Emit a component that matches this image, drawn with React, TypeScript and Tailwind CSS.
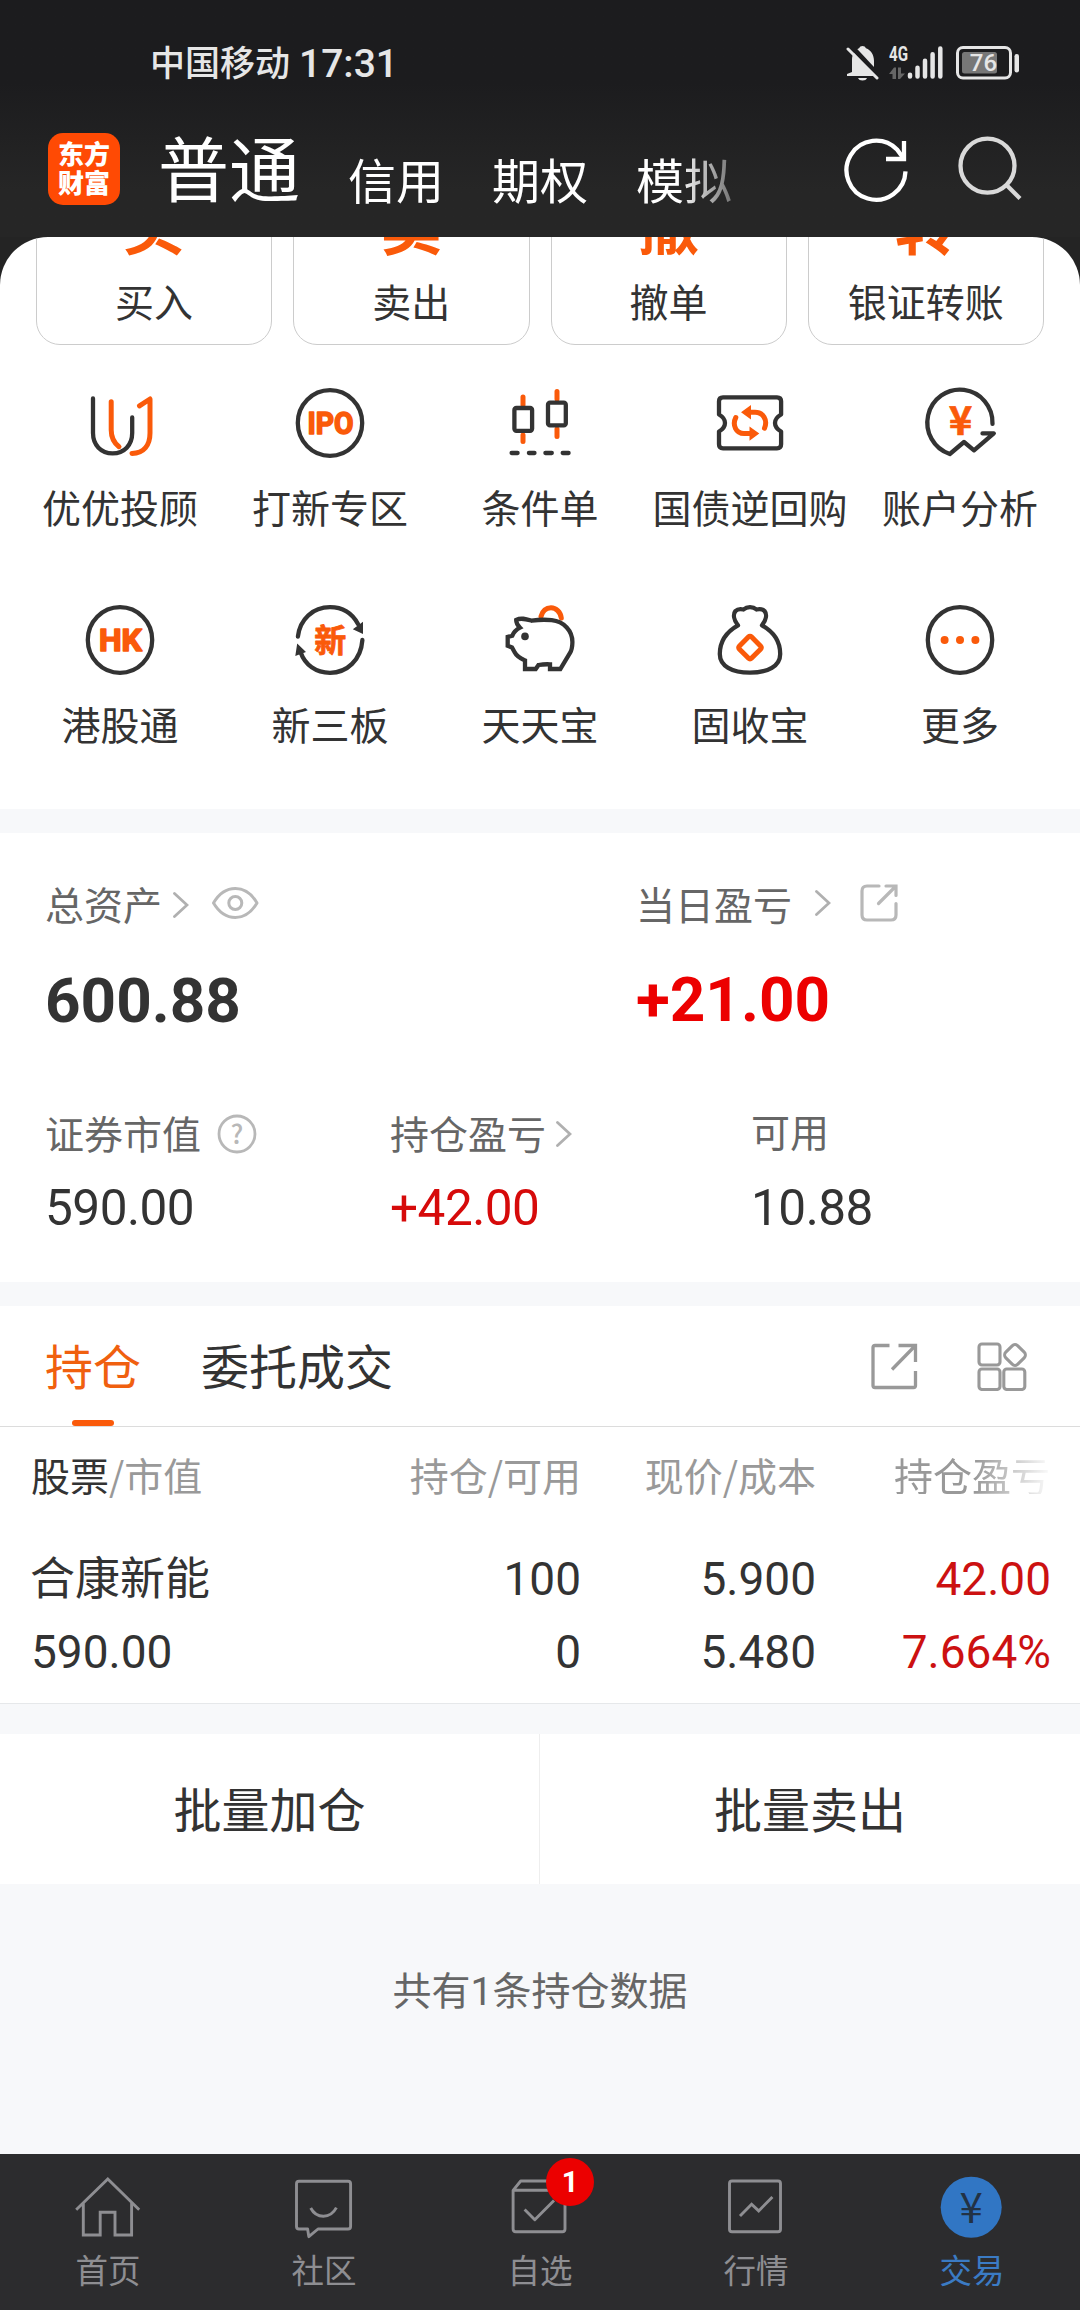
import type { ReactNode } from "react";

const accountTabs = ["信用", "期权", "模拟"];

const quickActions = [
  { glyph: "买", label: "买入" },
  { glyph: "卖", label: "卖出" },
  { glyph: "撤", label: "撤单" },
  { glyph: "转", label: "银证转账" },
];

const dark = { fill: "none", stroke: "#333", strokeWidth: 4.3, strokeLinecap: "round", strokeLinejoin: "round" } as const;
const orange = { ...dark, stroke: "#fa5a0a", strokeWidth: 5 } as const;
const orangeText = {
  fill: "#fa5a0a",
  stroke: "#fa5a0a",
  strokeLinejoin: "round",
  textAnchor: "middle",
  fontWeight: 700,
} as const;

function Icon({ children }: { children: ReactNode }) {
  return (
    <svg viewBox="0 0 72 72" className="h-[72px] w-[72px] shrink-0 overflow-visible">
      {children}
    </svg>
  );
}

const services: { label: string; icon: ReactNode }[] = [
  {
    label: "优优投顾",
    icon: (
      <>
        <path {...dark} d="M9 11.5V46C9 58 17 66.3 28.6 66.3S48.2 58 48.2 46V30.5" />
        <path {...orange} d="M27.2 14.8V43C27.2 51 29.5 55.5 35 59.7M55.5 18.8L66 12V46C66 58 60 66 48 66.5" />
      </>
    ),
  },
  {
    label: "打新专区",
    icon: (
      <>
        <ellipse {...dark} cx="36" cy="36" rx="32.2" ry="32.8" />
        <text
          {...orangeText}
          className="font-['Roboto',sans-serif]"
          x="36.5"
          y="46.8"
          fontSize="30.5"
          strokeWidth="1.6"
          textLength="46"
          lengthAdjust="spacingAndGlyphs"
        >
          IPO
        </text>
      </>
    ),
  },
  {
    label: "条件单",
    icon: (
      <>
        <path {...orange} d="M19 10V18M19 48V54.5M53 4.6V12M53 42V49.4" />
        <rect {...dark} x="10.4" y="21" width="17.7" height="22.8" rx="2" />
        <rect {...dark} x="44" y="15.7" width="17.8" height="22.7" rx="2" />
        <path {...dark} d="M7.6 66H13.6M24.9 66H30.5M41.4 66H47.8M58.7 66H64.6" />
      </>
    ),
  },
  {
    label: "国债逆回购",
    icon: (
      <>
        <path
          {...dark}
          d="M9 10.3H63Q67.1 10.3 67.1 14.3V27.5Q61 31 61 36T67.1 44.5V57.3Q67.1 61.3 63 61.3H9Q5 61.3 5 57.3V44.5Q11 41 11 36T5 27.5V14.3Q5 10.3 9 10.3Z"
        />
        <path {...orange} d="M36 25.3H41C49 25.3 54 33 50.5 41.2M36 46.5H30C22 46.5 18 38 21.8 30.5" />
        <path fill="#fa5a0a" d="M27 25.3L37 18V32.5ZM45.3 46.5L35.5 39.5V53.7Z" />
      </>
    ),
  },
  {
    label: "账户分析",
    icon: (
      <>
        <path {...dark} d="M68.5 36.8A32.6 33 0 1 0 25.8 67L40 55L50 63.3L69.8 46.4H58.5" />
        <text {...orangeText} x="36.5" y="48" fontSize="40" strokeWidth="0.6">
          ¥
        </text>
      </>
    ),
  },
  {
    label: "港股通",
    icon: (
      <>
        <ellipse {...dark} cx="36" cy="36" rx="32.2" ry="32.8" />
        <text
          {...orangeText}
          className="font-['Roboto',sans-serif]"
          x="36.5"
          y="46.8"
          fontSize="30.5"
          strokeWidth="1.6"
          textLength="43"
          lengthAdjust="spacingAndGlyphs"
        >
          HK
        </text>
      </>
    ),
  },
  {
    label: "新三板",
    icon: (
      <>
        <path {...dark} d="M3.9 32.5C6 15 19 3.2 36 3.2C48 3.2 58 9 64 20M68.4 36C67 56 53 68.8 36 68.8C22 68.8 11 61 6.5 48" />
        <path fill="#333" d="M58.8 25.3L69 17.8V30ZM3.2 39.5L12 48L1.3 52Z" />
        <text {...orangeText} x="36.3" y="47.5" fontSize="32" strokeWidth="0.8">
          新
        </text>
      </>
    ),
  },
  {
    label: "天天宝",
    icon: (
      <>
        <path {...orange} d="M37 12.5C38.5 7 42 3.8 47 3.8S56.5 8 57.3 14" />
        <path
          {...dark}
          strokeLinejoin="miter"
          d="M12.2 15.8C17 13.4 22 15 27.7 16.7C35 15.6 42 15.5 47.7 16.2C60 17.5 68.6 27 68.4 38.5C68.3 43 67.6 46.5 66 49L56.3 65H46V60.3Q40 60 34.5 61L31.7 65H21V56.5Q13 53 10.5 48L8 43.5L3.7 41.7V33L8.3 31.7Q10.5 26.5 16 23.7Q12 19.5 12.2 15.8Z"
        />
        <circle cx="21" cy="32.4" r="3.8" fill="#333" />
      </>
    ),
  },
  {
    label: "固收宝",
    icon: (
      <>
        <path
          {...dark}
          d="M24 21.3C19.5 15.5 19 10 21.5 7C23.5 5 26.5 4.8 29.5 5.5C33 2.4 39 2.4 42.5 5.5C45.5 4.8 48.5 5 50.5 7C53 10 52.5 15.5 48 21.3C60 28 66.2 37 66.2 50C66.2 62 54 68.7 36 68.7S5.8 62 5.8 50C5.8 37 12 28 24 21.3Z"
        />
        <rect {...orange} x="27.4" y="35" width="17.2" height="17.2" rx="2" transform="rotate(45 36 43.6)" />
      </>
    ),
  },
  {
    label: "更多",
    icon: (
      <>
        <ellipse {...dark} cx="36" cy="36" rx="32.2" ry="32.8" />
        <g fill="#fa5a0a">
          <circle cx="20.6" cy="36" r="4" />
          <circle cx="36" cy="36" r="4" />
          <circle cx="51.4" cy="36" r="4" />
        </g>
      </>
    ),
  },
];

const holdings = [
  {
    name: "合康新能",
    nameClass: "-ml-px",
    values: ["100", "5.900", "42.00"],
  },
  {
    name: "590.00",
    nameClass: "h-[50px] font-['Roboto',sans-serif] text-[46px] leading-[57px]",
    values: ["0", "5.480", "7.664%"],
  },
];

const navStroke = { fill: "none", stroke: "#8e8e92", strokeWidth: 2.9, strokeLinejoin: "round" } as const;

const navItems: { label: string; icon: ReactNode; badge?: string; active?: boolean }[] = [
  {
    label: "首页",
    icon: <path {...navStroke} strokeLinejoin="miter" d="M4.2 38.8L35.8 8L67.2 38.8M11.3 32V64H28.2V41.3H43V64H59.6V32" />,
  },
  {
    label: "社区",
    icon: (
      <path
        {...navStroke}
        d="M11 10.3H60Q62.6 10.3 62.6 13V55.4Q62.6 58 60 58H30L20.8 65.6L19.6 58H11Q8.5 58 8.5 55.4V13Q8.5 10.3 11 10.3ZM22.7 37Q27 45.2 35.4 45.2T48.4 36.6"
      />
    ),
  },
  {
    label: "自选",
    badge: "1",
    icon: (
      <path
        {...navStroke}
        d="M9.1 19.3L16.7 10H54L61 19.3V58Q61 60.7 58.4 60.7H11.7Q9.1 60.7 9.1 58ZH61M20.6 38.5L30.8 48.7L50 29.5"
      />
    ),
  },
  {
    label: "行情",
    icon: (
      <>
        <rect {...navStroke} x="9.5" y="10" width="51" height="50.7" rx="2.5" />
        <path {...navStroke} strokeLinejoin="miter" d="M20 45L31.6 33.2L38.7 39.9L52.4 26" />
      </>
    ),
  },
  {
    label: "交易",
    active: true,
    icon: (
      <>
        <circle cx="35.2" cy="36.3" r="30.5" fill="#3176c4" />
        <text x="35.2" y="51.5" fontSize="42" textAnchor="middle" fill="#223244">
          ¥
        </text>
      </>
    ),
  },
];

function Chevron({ className = "" }: { className?: string }) {
  return (
    <svg viewBox="0 0 16 26" className={`h-[26px] w-4 shrink-0 ${className}`}>
      <path d="M1.5 1.5L14 13L1.5 24.5" fill="none" stroke="#b0b0b0" strokeWidth="2.8" strokeLinecap="round" />
    </svg>
  );
}

function StatusBar() {
  return (
    <div className="flex h-[126px] items-center justify-between pr-[60px] pl-[150px] text-[#e6e6e6]">
      <div className="flex items-center font-medium">
        <span className="-mt-[3px] text-[35px]">中国移动</span>
        <span className="mt-[2px] ml-[9px] font-['Roboto',sans-serif] text-[39px]">17:31</span>
      </div>
      <svg viewBox="0 0 174 36" className="h-9 w-[174px] font-['Roboto',sans-serif]">
        <g fill="#e6e6e6">
          <path d="M6 27V15C6 9 9 4.500 13 3.200Q14 1 16.500 1T20 3.200C25 5 28 10 28 16V25L32 31H1V29Z" />
          <path d="M12 33H21Q20 35.500 16.500 35.500T12 33Z" />
        </g>
        <path d="M4 0L33 31" stroke="#1c1c1e" strokeWidth="5" />
        <path d="M2 4L31 33" stroke="#e6e6e6" strokeWidth="3" strokeLinecap="round" />
        <text x="43" y="16" fontSize="21" fontWeight="700" textLength="19" lengthAdjust="spacingAndGlyphs" fill="#e6e6e6">
          4G
        </text>
        <path d="M43 29L48 22.500H50V34H46.500V29ZM59 28.500L54 34H52V22.500H55V28.500Z" fill="#666" />
        <g stroke="#e6e6e6" strokeWidth="4.500" strokeLinecap="round">
          <path d="M64 29.700V31.500M71.500 22.700V31.500M79 15.700V31.500M86.600 9.300V31.500M94.300 3.500V31.500" />
        </g>
        <rect x="111.500" y="2.500" width="53" height="30.500" rx="5.500" fill="none" stroke="#e6e6e6" strokeWidth="3" />
        <rect x="116" y="7" width="35" height="21.500" rx="2.500" fill="#777" />
        <rect x="168.500" y="9" width="4.500" height="18.500" rx="2.200" fill="#e6e6e6" />
        <text x="137.500" y="26.300" fontSize="24" fontWeight="500" textAnchor="middle" fill="#e6e6e6">
          76
        </text>
      </svg>
    </div>
  );
}

function Header() {
  return (
    <header className="h-[237px] bg-linear-to-b from-[#1c1c1e] from-35% to-[#262626] to-80%">
      <StatusBar />
      <div className="flex h-[86px] items-center pl-12">
        <div className="flex h-[72px] w-[72px] flex-col items-center justify-center rounded-[15px] bg-[#ff4a04] pb-1 text-[26px] leading-[29px] font-black text-white">
          <span>东方</span>
          <span>财富</span>
        </div>
        <span className="-mt-2 ml-[38px] text-[71px] leading-[86px] text-white">普通</span>
        <nav className="ml-12 flex gap-12 pt-[18px] text-[48px] leading-[60px] text-white [mask-image:linear-gradient(to_right,#000_86%,transparent_108%)]">
          {accountTabs.map((tab) => (
            <span key={tab}>{tab}</span>
          ))}
        </nav>
        <svg viewBox="0 0 180 68" className="mr-[57px] ml-auto h-[68px] w-[180px]">
          <g fill="none" stroke="#fff" strokeWidth="4.300">
            <path d="M62.500 36.300A29.500 29.500 0 1 1 54 14.500L61 24" />
            <path d="M61 6V24H43" />
          </g>
          <g fill="none" stroke="#d9d9d9" strokeWidth="4.300">
            <circle cx="144.500" cy="30.700" r="27" />
            <path d="M163 49.500L177 63.500" />
          </g>
        </svg>
      </div>
    </header>
  );
}

function Services() {
  return (
    <section className="h-[572px] overflow-hidden rounded-t-[48px] bg-white text-[39px] leading-10 text-[#333]">
      {/* scrolled up, so the icons of the first row are half hidden */}
      <div className="-mt-[70px] grid grid-cols-4 gap-[21px] px-9">
        {quickActions.map((action) => (
          <div
            key={action.label}
            className="flex h-[178px] flex-col items-center justify-end gap-[26px] rounded-3xl border border-[#ccc] pb-6"
          >
            <span className="text-[62px] leading-[62px] font-bold text-[#fa5a0a]">{action.glyph}</span>
            <span>{action.label}</span>
          </div>
        ))}
      </div>
      <div className="mt-[42px] grid grid-cols-5 gap-y-[78px] px-[15px]">
        {services.map((service) => (
          <div key={service.label} className="flex flex-col items-center gap-[27px] whitespace-nowrap">
            <Icon>{service.icon}</Icon>
            <span>{service.label}</span>
          </div>
        ))}
      </div>
    </section>
  );
}

function Assets() {
  return (
    <section className="mt-6 h-[449px] bg-white pt-[50px] pl-[45px] text-[39px] leading-10 text-[#666]">
      <div className="grid grid-cols-[591px_1fr]">
        <div>
          <div className="flex items-center">
            总资产
            <Chevron className="mt-1 ml-[11px]" />
            <svg viewBox="0 0 48 34" className="ml-[22px] h-[34px] w-12">
              <g fill="none" stroke="#b8b8b8" strokeWidth="3">
                <path d="M2.500 17Q11 2.500 24.300 2.500T46 17Q37.500 31.500 24.300 31.500T2.500 17Z" strokeLinejoin="round" />
                <circle cx="24.300" cy="17" r="6.500" />
              </g>
            </svg>
          </div>
          <div className="mt-[43px] h-[60px] font-['Roboto',sans-serif] text-[62px] leading-[69px] font-bold text-[#333]">
            600.88
          </div>
        </div>
        <div>
          <div className="flex items-center">
            当日盈亏
            <Chevron className="ml-[23px]" />
            <svg viewBox="0 0 40 40" className="ml-7 h-10 w-10">
              <path
                d="M20 3H8Q3 3 3 8V32Q3 37 8 37H32Q37 37 37 32V20.500M27 3H37V12.500M36 4L19.500 20.500"
                fill="none"
                stroke="#b8b8b8"
                strokeWidth="3.200"
                strokeLinecap="round"
              />
            </svg>
          </div>
          <div className="mt-[43px] h-[60px] font-['Roboto',sans-serif] text-[62px] leading-[67px] font-bold text-[#ec0000]">
            +21.00
          </div>
        </div>
      </div>
      <div className="mt-[84px] grid grid-cols-[345px_361px_1fr]">
        <div className="flex items-center">
          证券市值
          <svg viewBox="0 0 40 40" className="mt-1 ml-4 h-10 w-10">
            <circle cx="20" cy="20" r="18" fill="none" stroke="#b8b8b8" strokeWidth="2.800" />
            <text x="20" y="29.500" fontSize="26" fontWeight="500" textAnchor="middle" fill="#b8b8b8">
              ?
            </text>
          </svg>
        </div>
        <div className="flex items-center">
          持仓盈亏
          <Chevron className="mt-1 ml-[10px]" />
        </div>
        <div>可用</div>
      </div>
      <div className="mt-[29px] grid grid-cols-[345px_361px_1fr] font-['Roboto',sans-serif] text-[49.5px] leading-[50px] tracking-[-0.5px] text-[#333]">
        <div>590.00</div>
        <div className="text-[#d60a0a]">+42.00</div>
        <div>10.88</div>
      </div>
    </section>
  );
}

function Holdings() {
  return (
    <section className="mt-6 bg-white">
      <div className="flex h-[121px] items-start border-b border-[#dcdcdc] pt-[34px] pl-[45px] text-[48px] leading-[48px] text-[#333]">
        <div className="flex flex-col items-center gap-8 text-[#f0600f]">
          持仓
          <span className="h-[6px] w-[42px] rounded-full bg-[#fa5a0a]" />
        </div>
        <div className="ml-[60px]">委托成交</div>
        <svg viewBox="0 0 48 48" className="mt-[2px] ml-auto h-12 w-12">
          <path
            d="M19.500 3.500H5Q3 3.500 3 5.500V43.500Q3 45.500 5 45.500H43.500Q45.500 45.500 45.500 43.500V29M28.500 3.500H45.500V20M44.500 4.500L22 27.500"
            fill="none"
            stroke="#999"
            strokeWidth="3.300"
          />
        </svg>
        <svg viewBox="0 0 50 50" className="mt-px mr-[53px] ml-[59px] h-[50px] w-[50px]">
          <g fill="none" stroke="#999" strokeWidth="3.100">
            <rect x="2" y="3" width="21" height="21" rx="3" />
            <rect x="2" y="28" width="21" height="20.500" rx="3" />
            <rect x="26.800" y="28" width="21" height="20.500" rx="3" />
            <rect x="29.500" y="5.500" width="17" height="17" rx="4" transform="rotate(45 38 14)" />
          </g>
        </svg>
      </div>
      <div className="grid grid-cols-[320px_230px_235px_234px] pt-[27px] pl-[31px] text-right text-[39px] leading-10 whitespace-nowrap text-[#999]">
        <div className="text-left">
          <span className="text-[#333]">股票</span>/市值
        </div>
        <div>持仓/可用</div>
        <div>现价/成本</div>
        <div className="justify-self-end [mask-image:linear-gradient(to_right,#000_52%,transparent_102%)]">持仓盈亏</div>
      </div>
      <div className="flex flex-col gap-[23px] border-b border-[#e6e8ea] pt-[57px] pb-[29px] pl-[31px]">
        {holdings.map((row) => (
          <div key={row.name} className="grid grid-cols-[320px_230px_235px_235px] text-[45px] leading-[50px] text-[#333]">
            <div className={row.nameClass}>{row.name}</div>
            {row.values.map((value, index) => (
              <div
                key={value}
                className={`h-[50px] text-right font-['Roboto',sans-serif] text-[46px] leading-[57px] ${
                  index === 2 ? "text-[#cc1111]" : ""
                }`}
              >
                {value}
              </div>
            ))}
          </div>
        ))}
      </div>
    </section>
  );
}

function TabBar() {
  return (
    <nav className="mt-auto grid h-[156px] grid-cols-5 bg-[#2c2c2e] text-[32.5px] leading-9 text-[#8e8e92]">
      {navItems.map((item) => (
        <div key={item.label} className={`flex flex-col items-center pt-[17px] ${item.active ? "text-[#3b7bc4]" : ""}`}>
          <div className="relative">
            <Icon>{item.icon}</Icon>
            {item.badge ? (
              <span className="absolute -top-[13px] left-[42px] flex h-12 w-12 items-center justify-center rounded-full bg-[#ec0000] font-['Roboto',sans-serif] text-[29px] font-bold text-white">
                {item.badge}
              </span>
            ) : null}
          </div>
          <span className="mt-[8px]">{item.label}</span>
        </div>
      ))}
    </nav>
  );
}

export default function App() {
  return (
    <div className="flex h-[2310px] w-[1080px] flex-col overflow-hidden bg-[#f7f8fa] font-['Noto_Sans_CJK_SC',sans-serif]">
      <Header />
      <div className="bg-[#242424]">
        <Services />
      </div>
      <Assets />
      <Holdings />
      <div className="mt-[30px] grid h-[150px] grid-cols-2 bg-white text-center text-[48px] leading-[146px] text-[#333]">
        <div className="border-r border-[#eee]">批量加仓</div>
        <div>批量卖出</div>
      </div>
      <p className="mt-[84px] text-center text-[39px] leading-10 text-[#666]">
        共有<span className="font-['Roboto',sans-serif]">1</span>条持仓数据
      </p>
      <TabBar />
    </div>
  );
}
